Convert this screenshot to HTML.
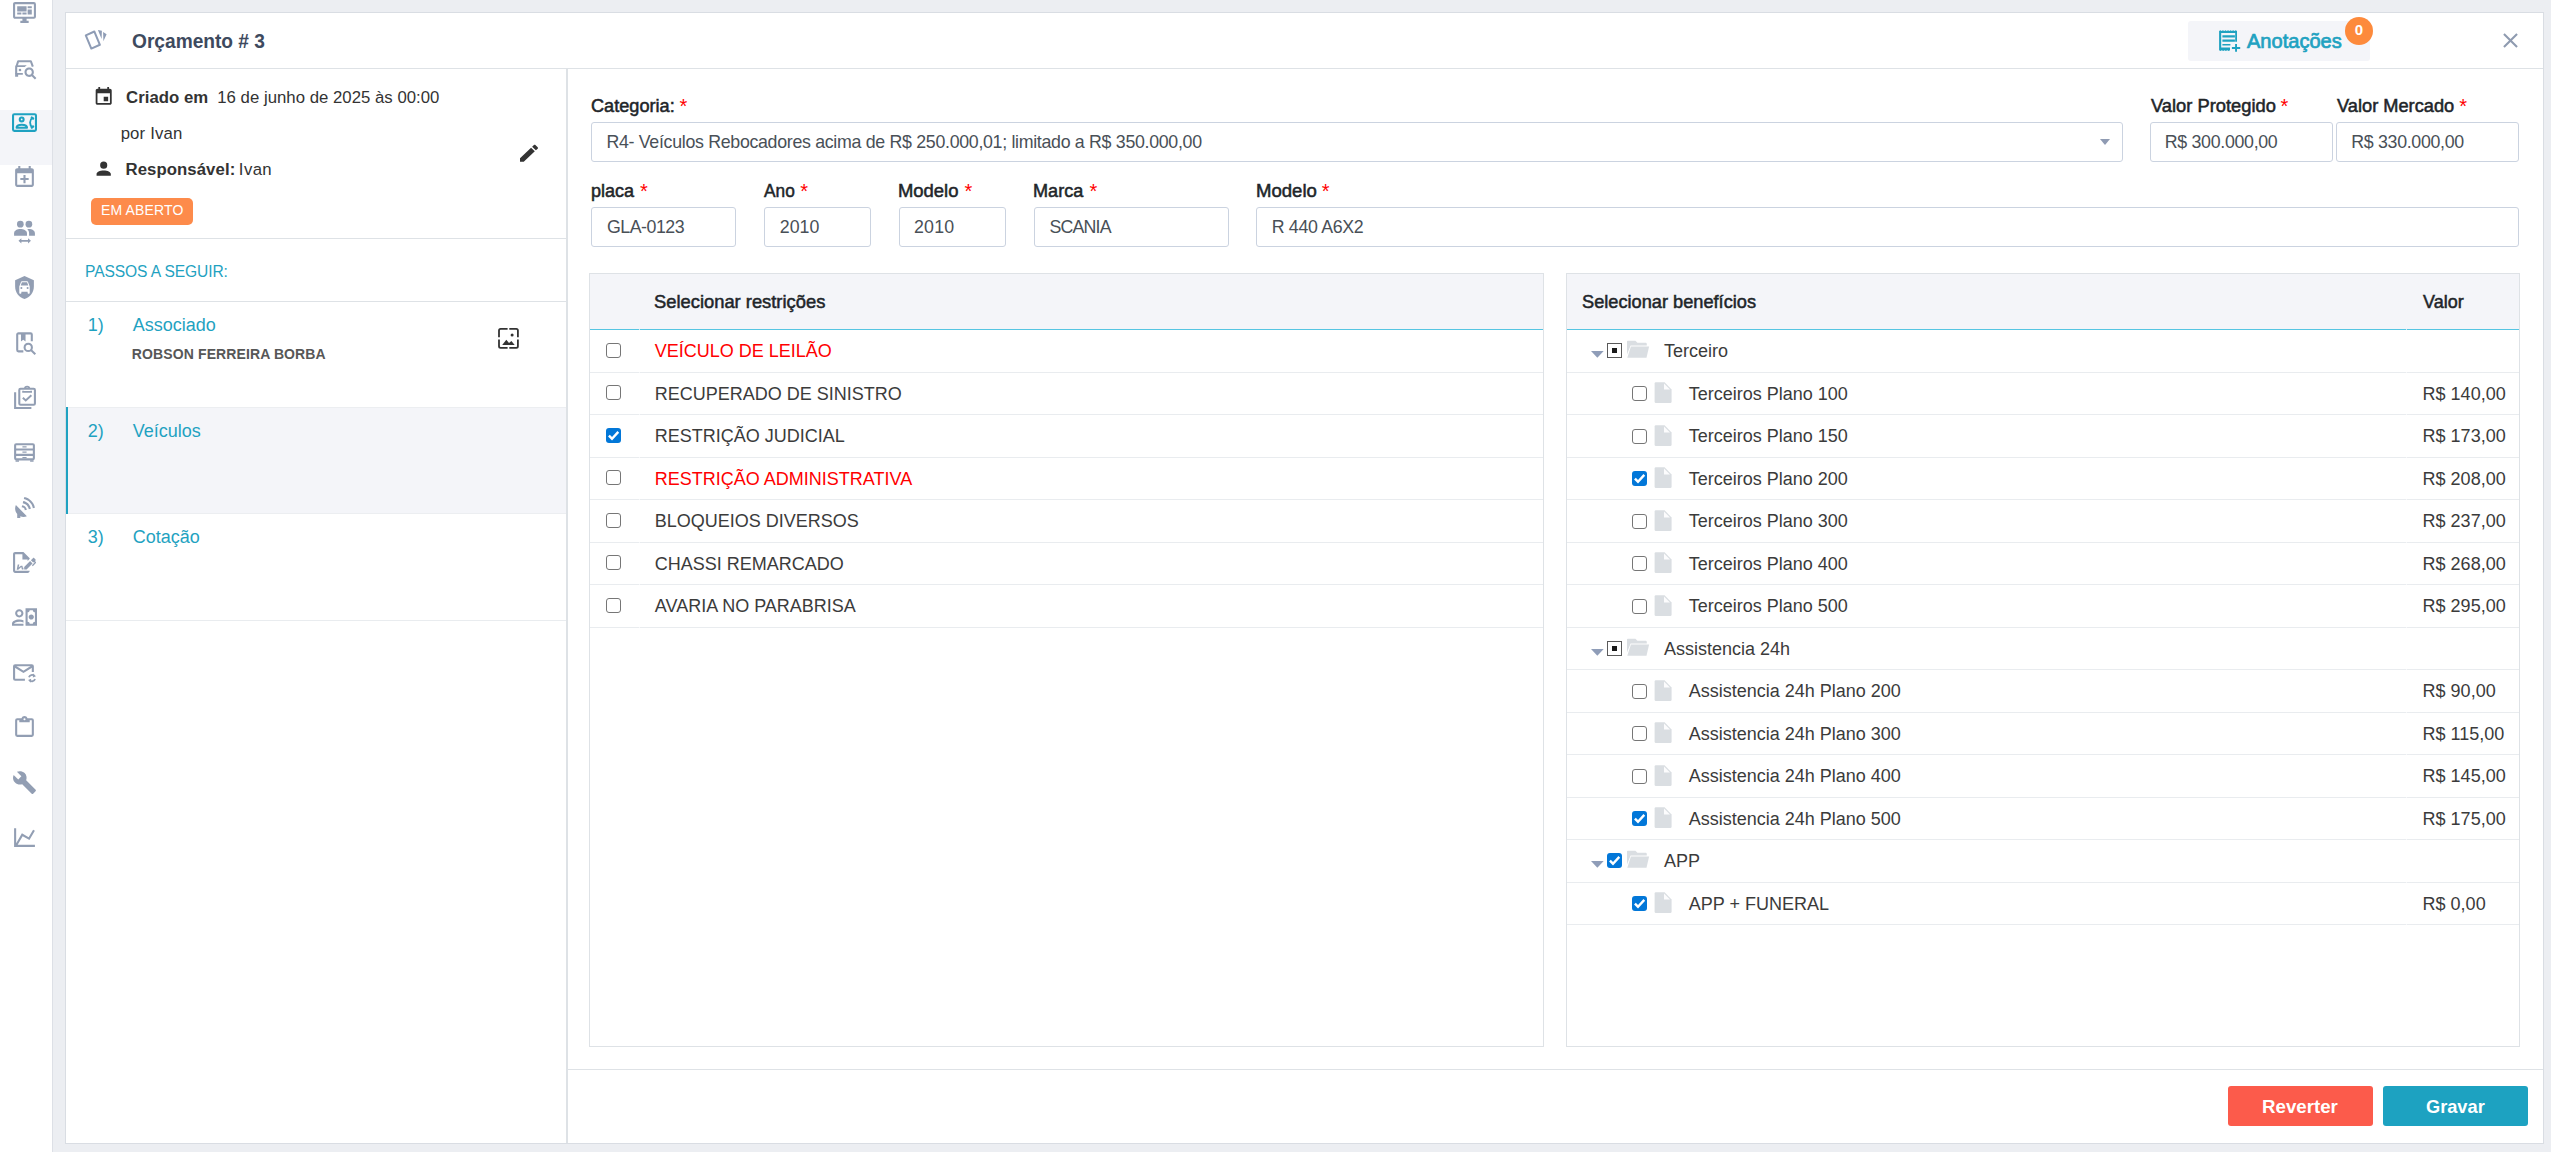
<!DOCTYPE html><html lang="pt-BR"><head><meta charset="utf-8"><title>Orçamento # 3</title><style>
*{box-sizing:border-box}
html,body{margin:0;padding:0}
body{width:2551px;height:1152px;overflow:hidden;position:relative;background:#eceef2;font-family:"Liberation Sans",sans-serif;color:#3b3b3b}
.abs{position:absolute}
.t{position:absolute;white-space:nowrap;line-height:1}
.inp{position:absolute;height:40px;border:1px solid #cbd3e0;border-radius:3px;background:#fff}
.cb{position:absolute;width:15px;height:15px;border:1.3px solid #767676;border-radius:3px;background:#fff}
.cb.on{border:none;background:#0277d8}
</style></head><body>
<div class="abs" style="left:0;top:0;width:53px;height:1152px;background:#fff;border-right:1px solid #dde0e6"></div>
<div class="abs" style="left:0;top:110px;width:52px;height:55px;background:#f4f5f9"></div>
<svg style="position:absolute;left:12px;top:0px;color:#929eb3" width="25" height="25" viewBox="0 0 24 24" fill="currentColor" ><path d="M21,16V4H3V16H21M21,2A2,2 0 0,1 23,4V16A2,2 0 0,1 21,18H14V20H16V22H8V20H10V18H3C1.89,18 1,17.1 1,16V4C1,2.89 1.89,2 3,2H21M5,6H14V11H5V6M15,6H19V8H15V6M19,9V14H15V9H19M5,12H9V14H5V12M10,12H14V14H10V12Z"/></svg>
<svg style="position:absolute;left:12px;top:55px;color:#929eb3" width="25" height="25" viewBox="0 0 24 24" fill="currentColor" ><path d="M16.5 12C14 12 12 14 12 16.5S14 21 16.5 21C17.4 21 18.2 20.8 18.9 20.3L22 23.4L23.4 22L20.3 18.9C20.8 18.2 21 17.4 21 16.5C21 14 19 12 16.5 12M16.5 19C15.1 19 14 17.9 14 16.5S15.1 14 16.5 14 19 15.1 19 16.5 17.9 19 16.5 19"/><path d="M4 18V12L5.9 6H18.1L20 11.2" fill="none" stroke="currentColor" stroke-width="2" stroke-linejoin="round"/><path d="M3.6 9.9H14.2L12.2 11.6H3.2ZM3 17.2H10.4V19H3ZM3 19H5.9V20.9H3Z"/><circle cx="7.66" cy="14.45" r="1.25"/></svg>
<svg style="position:absolute;left:12px;top:110px;color:#1fa2c1" width="25" height="25" viewBox="0 0 24 24" fill="currentColor" ><rect x="1" y="4" width="22" height="16" rx="1.2" fill="none" stroke="currentColor" stroke-width="2"/><circle cx="9.3" cy="9.1" r="1.85" fill="none" stroke="currentColor" stroke-width="2"/><path d="M4.4 17.1C4.4 14.6 7.4 14.1 9.4 14.1S14.4 14.6 14.4 17.1Z" fill="none" stroke="currentColor" stroke-width="2" stroke-linejoin="round"/><path d="M19.6 7.4C16.6 9.6 16.6 14.6 19.6 16.8" fill="none" stroke="currentColor" stroke-width="1.8"/><path d="M19 7.3L20.2 8.2M19 16.8L20.2 15.9" fill="none" stroke="currentColor" stroke-width="2.3" stroke-linecap="round"/></svg>
<svg style="position:absolute;left:12px;top:165px;color:#929eb3" width="25" height="25" viewBox="0 0 24 24" fill="currentColor" ><path d="M19 19V8H5V19H19M16 1H18V3H19C20.11 3 21 3.9 21 5V19C21 20.11 20.11 21 19 21H5C3.89 21 3 20.1 3 19V5C3 3.89 3.89 3 5 3H6V1H8V3H16V1M11 9.5H13V12.5H16V14.5H13V17.5H11V14.5H8V12.5H11V9.5Z"/></svg>
<svg style="position:absolute;left:12px;top:220px;color:#929eb3" width="25" height="25" viewBox="0 0 24 24" fill="currentColor" ><circle cx="8" cy="4" r="3.2"/><circle cx="16.2" cy="4" r="3.2"/><path d="M2 15V12.6C2 10 5.2 8.6 8 8.6S14.4 10 14.4 12.6V15Z"/><path d="M16.4 15V12.6C16.4 11 15.8 9.8 14.6 8.8C15.2 8.7 15.7 8.6 16.2 8.6C19 8.6 22 10 22 12.6V15Z"/><path d="M6.2 20L9 17.4V19.2H15.4V17.4L18.2 20L15.4 22.6V20.8H9V22.6Z"/></svg>
<svg style="position:absolute;left:12px;top:275px;color:#929eb3" width="25" height="25" viewBox="0 0 24 24" fill="currentColor" ><path d="M12,1L3,5V11C3,16.55 6.84,21.74 12,23C17.16,21.74 21,16.55 21,11V5L12,1M14.5,6C14.85,6 15.16,6.21 15.28,6.5L17,11.12V17.27C17,17.67 16.67,18 16.27,18H15.73C15.33,18 15,17.67 15,17.27V16H9V17.27C9,17.67 8.67,18 8.27,18H7.73C7.33,18 7,17.67 7,17.27V11.12L8.72,6.5C8.84,6.21 9.15,6 9.5,6H14.5M9.5,7L8.37,10H15.63L14.5,7H9.5M9,11.5A1,1 0 0,0 8,12.5A1,1 0 0,0 9,13.5A1,1 0 0,0 10,12.5A1,1 0 0,0 9,11.5M15,11.5A1,1 0 0,0 14,12.5A1,1 0 0,0 15,13.5A1,1 0 0,0 16,12.5A1,1 0 0,0 15,11.5Z"/></svg>
<svg style="position:absolute;left:12px;top:330px;color:#929eb3" width="25" height="25" viewBox="0 0 24 24" fill="currentColor" ><path d="M10.9 20.5H6.2C5.5 20.5 5 20 5 19.3V4.4C5 3.7 5.5 3.2 6.2 3.2H17.8C18.5 3.2 19 3.7 19 4.4V10.7" fill="none" stroke="currentColor" stroke-width="2"/><path d="M8.6 3.2H13V11L10.8 9.4L8.6 11Z"/><circle cx="15.6" cy="16.7" r="3.5" fill="none" stroke="currentColor" stroke-width="2"/><path d="M18.2 19.3L22.4 23.2" stroke="currentColor" stroke-width="2" fill="none"/></svg>
<svg style="position:absolute;left:12px;top:385px;color:#929eb3" width="25" height="25" viewBox="0 0 24 24" fill="currentColor" ><path d="M3 7V22H18.6" fill="none" stroke="currentColor" stroke-width="2"/><rect x="7" y="3.6" width="15" height="15.4" rx="1.2" fill="none" stroke="currentColor" stroke-width="2"/><path d="M10.6 5.6V6.6H18.4V5.6" fill="none" stroke="currentColor" stroke-width="1.6"/><path d="M12.4 3.6A2.1 2.1 0 0 1 16.6 3.6" fill="none" stroke="currentColor" stroke-width="1.8"/><path d="M10.4 12.2L13.2 14.8L18.6 9.8" fill="none" stroke="currentColor" stroke-width="1.9"/></svg>
<svg style="position:absolute;left:12px;top:440px;color:#929eb3" width="25" height="25" viewBox="0 0 24 24" fill="currentColor" ><rect x="3" y="4" width="18" height="14.6" rx="1" fill="none" stroke="currentColor" stroke-width="2"/><path d="M3 9.1H21M3 14.3H21" stroke="currentColor" stroke-width="2" fill="none"/><path d="M10 6.6H14M10 11.7H14M10 16.9H14" stroke="currentColor" stroke-width="1.1" fill="none"/><path d="M3.4 19.4H6.7V20.9H3.4ZM17.4 19.4H20.7V20.9H17.4Z"/></svg>
<svg style="position:absolute;left:12px;top:495px;color:#929eb3" width="25" height="25" viewBox="0 0 24 24" fill="currentColor" ><path d="M11.86,2L11.34,3.93C15.75,4.78 19.2,8.23 20.05,12.65L22,12.13C20.95,7.03 16.96,3.04 11.86,2M10.82,5.86L10.3,7.81C13.34,8.27 15.72,10.65 16.18,13.68L18.12,13.16C17.46,9.44 14.55,6.5 10.82,5.86M3.72,9.69C3.25,10.73 3,11.86 3,13C3,14.95 3.71,16.82 5,18.28V22H8V20.41C8.95,20.8 9.97,21 11,21C12.14,21 13.27,20.75 14.3,20.28L3.72,9.69M9.79,9.76L9.26,11.72A3,3 0 0,1 12.26,14.72L14.23,14.2C14,11.86 12.13,10 9.79,9.76Z"/></svg>
<svg style="position:absolute;left:12px;top:550px;color:#929eb3" width="25" height="25" viewBox="0 0 24 24" fill="currentColor" ><path d="M19.7 12.9L14 18.6H11.7V16.3L17.4 10.6L19.7 12.9M23.1 12.1C23.1 12.4 22.8 12.7 22.5 13L20 15.5L19.1 14.6L21.7 12L21.1 11.4L20.4 12.1L18.1 9.8L20.3 7.7C20.5 7.5 20.9 7.5 21.2 7.7L22.6 9.1C22.8 9.3 22.8 9.7 22.6 10C22.4 10.2 22.2 10.4 22.2 10.6C22.2 10.8 22.4 11 22.6 11.2C22.9 11.5 23.2 11.8 23.1 12.1M3 20V4H10V9H15V10.5L17 8.5V8L11 2H3C1.9 2 1 2.9 1 4V20C1 21.1 1.9 22 3 22H15C16.1 22 17 21.1 17 20H3M11 17.1C10.8 17.1 10.6 17.2 10.5 17.2L10 15H8.5L6.4 16.7L7 14H5.5L4.5 19H6L8.9 16.4L9.5 18.7H10.5L11 18.6V17.1Z"/></svg>
<svg style="position:absolute;left:12px;top:605px;color:#929eb3" width="25" height="25" viewBox="0 0 24 24" fill="currentColor" ><path d="M16 11.5C16 10.12 17.12 9 18.5 9S21 10.12 21 11.5 19.88 14 18.5 14 16 12.88 16 11.5M13 3V20H24V3H13M22 16C20.9 16 20 16.9 20 18H17C17 16.9 16.11 16 15 16V7C16.11 7 17 6.11 17 5H20C20 6.11 20.9 7 22 7V16M7 6C8.1 6 9 6.9 9 8S8.1 10 7 10 5 9.1 5 8 5.9 6 7 6M7 4C4.79 4 3 5.79 3 8S4.79 12 7 12 11 10.21 11 8 9.21 4 7 4M7 14C3.13 14 0 15.79 0 18V20H11V18H2C2 17.42 3.75 16 7 16C8.83 16 10.17 16.45 11 16.95V14.72C9.87 14.27 8.5 14 7 14Z"/></svg>
<svg style="position:absolute;left:12px;top:660px;color:#929eb3" width="25" height="25" viewBox="0 0 24 24" fill="currentColor" ><path d="M12.4 19H3C2.45 19 2 18.55 2 18V6C2 5.45 2.45 5 3 5H19C19.55 5 20 5.45 20 6V11.4" fill="none" stroke="currentColor" stroke-width="2"/><path d="M2.5 6L11 11.4L19.5 6" fill="none" stroke="currentColor" stroke-width="2"/><path d="M16.3 16.6A3.1 3.1 0 0 1 21.4 15.2M22.1 18.2A3.1 3.1 0 0 1 17 19.6" fill="none" stroke="currentColor" stroke-width="1.7"/><path d="M20.3 13L23 15.6L20 16.7ZM18.1 21.8L15.4 19.2L18.4 18.1Z"/></svg>
<svg style="position:absolute;left:12px;top:715px;color:#929eb3" width="25" height="25" viewBox="0 0 24 24" fill="currentColor" ><path d="M19,3H14.82C14.4,1.84 13.3,1 12,1C10.7,1 9.6,1.84 9.18,3H5A2,2 0 0,0 3,5V19A2,2 0 0,0 5,21H19A2,2 0 0,0 21,19V5A2,2 0 0,0 19,3M12,3A1,1 0 0,1 13,4A1,1 0 0,1 12,5A1,1 0 0,1 11,4A1,1 0 0,1 12,3M7,7H17V5H19V19H5V5H7V7Z"/></svg>
<svg style="position:absolute;left:12px;top:770px;color:#929eb3" width="25" height="25" viewBox="0 0 24 24" fill="currentColor" ><path d="M22.7 19l-9.1-9.1c.9-2.3.4-5-1.5-6.9-2-2-5-2.4-7.4-1.3L9 6 6 9 1.6 4.7C.4 7.1.9 10.1 2.9 12.1c1.9 1.9 4.6 2.4 6.9 1.5l9.1 9.1c.4.4 1 .4 1.4 0l2.3-2.3c.5-.4.5-1.1.1-1.4z"/></svg>
<svg style="position:absolute;left:12px;top:825px;color:#929eb3" width="25" height="25" viewBox="0 0 24 24" fill="currentColor" ><path d="M16,11.78L20.24,4.45L21.97,5.45L16.74,14.5L10.23,10.75L5.46,19H22V21H2V3H4V17.54L9.5,8L16,11.78Z"/></svg>
<div class="abs" style="left:65px;top:12px;width:2479px;height:1132px;background:#fff;border:1px solid #d9dde3"></div>
<div class="abs" style="left:66px;top:68px;width:2477px;height:1px;background:#dee2e6"></div>
<div class="abs" style="left:566px;top:69px;width:2px;height:1074px;background:#dee2e6"></div>
<svg class="abs" style="left:82px;top:28px" width="28" height="26" viewBox="0 0 28 26"><path d="M3.8 7.41L12.38 3.53L17.9 16.79L9.32 20.57Z" fill="none" stroke="#8e9cb5" stroke-width="2" stroke-linejoin="round"/><path d="M15.9 2.1L19.9 2.8L19.6 11.1ZM21.1 4L24.6 6.2L21.4 13.2Z" fill="#8e9cb5"/></svg>
<div class="t" style="left:131.72px;top:31px;font-size:20.75px;color:#3e4a5e;transform:scaleX(0.9224);transform-origin:0 0;font-weight:bold;">Orçamento # 3</div>
<div class="abs" style="left:2188px;top:21px;width:182px;height:40px;background:#f4f5f9;border-radius:3px"></div>
<svg class="abs" style="left:2218px;top:30px;color:#1fa2c1" width="24" height="23" viewBox="0 0 24 23" fill="currentColor"><path d="M1.1 1.1L2.38 0.30L3.66 1.10L4.94 0.30L6.21 1.10L7.49 0.30L8.77 1.10L10.05 0.30L11.33 1.10L12.61 0.30L13.89 1.10L15.16 0.30L16.44 1.10L17.72 0.30L19.00 1.10V11.8H17.2V3.1H3.2V17.4H12V20.3L10.64 21.1L9.28 20.3L7.91 21.1L6.55 20.3L5.19 21.1L3.82 20.3L2.46 21.1L1.10 20.3Z"/><path d="M4.4 5.2H16.9V7.5H4.4ZM4.4 9.6H16.9V11.8H4.4ZM4.4 13.9H12.4V15.6H4.4ZM13.9 16.9H22.2V18.9H13.9ZM17.1 14.1H19V21.8H17.1Z"/></svg>
<div class="t" style="left:2246.62px;top:32px;font-size:19.4px;color:#1fa2c1;transform:scaleX(1.0336);transform-origin:0 0;-webkit-text-stroke:0.7px #1fa2c1;">Anotações</div>
<div class="abs" style="left:2345px;top:16.6px;width:28px;height:28px;border-radius:14px;background:#fd8a3c"></div>
<div class="t" style="left:2345px;top:22px;width:28px;text-align:center;font-size:15px;font-weight:bold;color:#fff">0</div>
<svg class="abs" style="left:2498.4px;top:28.4px" width="25" height="25" viewBox="0 0 24 24" fill="#8f9bb0"><path d="M19,6.41L17.59,5L12,10.59L6.41,5L5,6.41L10.59,12L5,17.59L6.41,19L12,13.41L17.59,19L19,17.59L13.41,12L19,6.41Z"/></svg>
<svg class="abs" style="left:92.9px;top:85.5px" width="21.4" height="21.4" viewBox="0 0 24 24" fill="#333"><path d="M17 12h-5v5h5v-5zM16 1v2H8V1H6v2H5c-1.11 0-1.99.9-1.99 2L3 19c0 1.1.89 2 2 2h14c1.1 0 2-.9 2-2V5c0-1.1-.9-2-2-2h-1V1h-2zm3 18H5V8h14v11z"/></svg>
<div class="t" style="left:126.06px;top:90px;font-size:16.75px;color:#333;letter-spacing:0.032px;font-weight:bold;">Criado em</div>
<div class="t" style="left:217.23px;top:90px;font-size:16.75px;color:#333;letter-spacing:0.020px;">16 de junho de 2025 às 00:00</div>
<div class="t" style="left:120.63px;top:126px;font-size:16.75px;color:#333;letter-spacing:0.176px;">por Ivan</div>
<svg class="abs" style="left:92.7px;top:157.6px" width="21.4" height="21.4" viewBox="0 0 24 24" fill="#333"><path d="M12,4A4,4 0 0,1 16,8A4,4 0 0,1 12,12A4,4 0 0,1 8,8A4,4 0 0,1 12,4M12,14C16.42,14 20,15.79 20,18V20H4V18C4,15.79 7.58,14 12,14Z"/></svg>
<div class="t" style="left:125.49px;top:162px;font-size:16.75px;color:#333;letter-spacing:0.073px;font-weight:bold;">Responsável:</div>
<div class="t" style="left:238.86px;top:162px;font-size:16.75px;color:#333;letter-spacing:0.388px;">Ivan</div>
<svg class="abs" style="left:517px;top:142.1px" width="24" height="22.65" viewBox="0 0 24 24" preserveAspectRatio="none" fill="#333"><path d="M20.71,7.04C21.1,6.65 21.1,6 20.71,5.63L18.37,3.29C18,2.9 17.35,2.9 16.96,3.29L15.12,5.12L18.87,8.87M3,17.25V21H6.75L17.81,9.93L14.06,6.18L3,17.25Z"/></svg>
<div class="abs" style="left:91px;top:198px;width:102px;height:27px;border-radius:5px;background:#fd8b4b"></div>
<div class="t" style="left:101.05px;top:203px;font-size:14px;color:#fff;letter-spacing:0.143px;">EM ABERTO</div>
<div class="abs" style="left:66px;top:238px;width:500px;height:1px;background:#dee2e6"></div>
<div class="t" style="left:85.02px;top:264px;font-size:15.6px;color:#1fa2c1;letter-spacing:-0.100px;">PASSOS A SEGUIR:</div>
<div class="abs" style="left:66px;top:301px;width:500px;height:1px;background:#dee2e6"></div>
<div class="abs" style="left:66px;top:407px;width:500px;height:107px;background:#f4f5f9;border-top:1px solid #eceef1;border-bottom:1px solid #eceef1"></div>
<div class="abs" style="left:66px;top:407px;width:2px;height:107px;background:#1fa2c1"></div>
<div class="abs" style="left:66px;top:620px;width:500px;height:1px;background:#e9ecef"></div>
<div class="t" style="left:87.7px;top:316px;font-size:18px;color:#1fa2c1">1)</div>
<div class="t" style="left:132.7px;top:316px;font-size:18px;color:#1fa2c1">Associado</div>
<div class="t" style="left:87.7px;top:422px;font-size:18px;color:#1fa2c1">2)</div>
<div class="t" style="left:132.7px;top:422px;font-size:18px;color:#1fa2c1">Veículos</div>
<div class="t" style="left:87.7px;top:528px;font-size:18px;color:#1fa2c1">3)</div>
<div class="t" style="left:132.7px;top:528px;font-size:18px;color:#1fa2c1">Cotação</div>
<div class="t" style="left:131.87px;top:347px;font-size:14px;color:#575757;letter-spacing:0.110px;font-weight:bold;">ROBSON FERREIRA BORBA</div>
<svg class="abs" style="left:496px;top:326px" width="25" height="25" viewBox="0 0 25 25"><path d="M3 11.3V4.4Q3 2.8 4.6 2.8H11.6M13.3 2.8H20.3Q21.9 2.8 21.9 4.4V11.3M3 13.4V20.3Q3 21.9 4.6 21.9H11.6M13.3 21.9H20.3Q21.9 21.9 21.9 20.3V13.4" fill="none" stroke="#333" stroke-width="1.8"/><circle cx="16.1" cy="8.9" r="1.5" fill="#333"/><path d="M6.2 18.9L10.3 13.8L13 17L15.4 15L18.7 18.9Z" fill="#333"/></svg>
<div class="t" style="left:591.23px;top:98px;font-size:17.6px;color:#212529;transform:scaleX(1.0316);transform-origin:0 0;-webkit-text-stroke:0.5px #212529;">Categoria:</div>
<div class="t" style="left:679.58px;top:96px;font-size:20px;color:#f00;">*</div>
<div class="inp" style="left:591px;top:122px;width:1532px"></div>
<div class="t" style="left:606.44px;top:134px;font-size:17.8px;color:#495057;letter-spacing:-0.308px;">R4- Veículos Rebocadores acima de R$ 250.000,01; limitado a R$ 350.000,00</div>
<svg class="abs" style="left:2100px;top:139px" width="10" height="6" viewBox="0 0 10 6" fill="#8f9bb3"><path d="M0 0H10L5 6Z"/></svg>
<div class="t" style="left:2150.78px;top:98px;font-size:17.6px;color:#212529;transform:scaleX(1.0411);transform-origin:0 0;-webkit-text-stroke:0.5px #212529;">Valor Protegido</div>
<div class="t" style="left:2280.48px;top:96px;font-size:20px;color:#f00;">*</div>
<div class="inp" style="left:2150px;top:122px;width:183px"></div>
<div class="t" style="left:2164.74px;top:134px;font-size:17.8px;color:#495057;letter-spacing:-0.303px;">R$ 300.000,00</div>
<div class="t" style="left:2337.18px;top:98px;font-size:17.6px;color:#212529;transform:scaleX(1.0361);transform-origin:0 0;-webkit-text-stroke:0.5px #212529;">Valor Mercado</div>
<div class="t" style="left:2459.18px;top:96px;font-size:20px;color:#f00;">*</div>
<div class="inp" style="left:2336px;top:122px;width:183px"></div>
<div class="t" style="left:2351.34px;top:134px;font-size:17.8px;color:#495057;letter-spacing:-0.320px;">R$ 330.000,00</div>
<div class="t" style="left:591.00px;top:183px;font-size:17.6px;color:#212529;transform:scaleX(1.0231);transform-origin:0 0;-webkit-text-stroke:0.5px #212529;">placa</div>
<div class="t" style="left:639.98px;top:181px;font-size:20px;color:#f00;">*</div>
<div class="inp" style="left:591px;top:207px;width:145px"></div>
<div class="t" style="left:607.01px;top:219px;font-size:17.8px;color:#495057;letter-spacing:-0.497px;">GLA-0123</div>
<div class="t" style="left:764.42px;top:183px;font-size:17.6px;color:#212529;transform:scaleX(0.9819);transform-origin:0 0;-webkit-text-stroke:0.5px #212529;">Ano</div>
<div class="t" style="left:800.28px;top:181px;font-size:20px;color:#f00;">*</div>
<div class="inp" style="left:764px;top:207px;width:107px"></div>
<div class="t" style="left:779.71px;top:219px;font-size:17.8px;color:#495057;letter-spacing:0.043px;">2010</div>
<div class="t" style="left:898.34px;top:183px;font-size:17.6px;color:#212529;transform:scaleX(1.0478);transform-origin:0 0;-webkit-text-stroke:0.5px #212529;">Modelo</div>
<div class="t" style="left:964.48px;top:181px;font-size:20px;color:#f00;">*</div>
<div class="inp" style="left:899px;top:207px;width:107px"></div>
<div class="t" style="left:914.01px;top:219px;font-size:17.8px;color:#495057;letter-spacing:0.226px;">2010</div>
<div class="t" style="left:1033.07px;top:183px;font-size:17.6px;color:#212529;transform:scaleX(1.0283);transform-origin:0 0;-webkit-text-stroke:0.5px #212529;">Marca</div>
<div class="t" style="left:1089.48px;top:181px;font-size:20px;color:#f00;">*</div>
<div class="inp" style="left:1034px;top:207px;width:195px"></div>
<div class="t" style="left:1049.60px;top:219px;font-size:17.8px;color:#495057;letter-spacing:-0.848px;">SCANIA</div>
<div class="t" style="left:1255.63px;top:183px;font-size:17.6px;color:#212529;transform:scaleX(1.0550);transform-origin:0 0;-webkit-text-stroke:0.5px #212529;">Modelo</div>
<div class="t" style="left:1321.78px;top:181px;font-size:20px;color:#f00;">*</div>
<div class="inp" style="left:1256px;top:207px;width:1263px"></div>
<div class="t" style="left:1271.74px;top:219px;font-size:17.8px;color:#495057;letter-spacing:-0.329px;">R 440 A6X2</div>
<div class="abs" style="left:589px;top:273px;width:955px;height:774px;border:1px solid #dee2e6;background:#fff"></div>
<div class="abs" style="left:590px;top:274px;width:953px;height:55px;background:#f4f5f9"></div>
<div class="abs" style="left:590px;top:329px;width:953px;height:1px;background:#56c5e2"></div>
<div class="abs" style="left:1566px;top:273px;width:954px;height:774px;border:1px solid #dee2e6;background:#fff"></div>
<div class="abs" style="left:1567px;top:274px;width:952px;height:55px;background:#f4f5f9"></div>
<div class="abs" style="left:1567px;top:329px;width:952px;height:1px;background:#56c5e2"></div>
<div class="abs" style="left:639px;top:329px;width:1px;height:1px;background:#d2ecf5"></div>
<div class="abs" style="left:2406px;top:329px;width:1px;height:1px;background:#d2ecf5"></div>
<div class="t" style="left:654.32px;top:294px;font-size:17.8px;color:#212529;transform:scaleX(1.0318);transform-origin:0 0;-webkit-text-stroke:0.5px #212529;">Selecionar restrições</div>
<div class="t" style="left:1581.63px;top:294px;font-size:17.8px;color:#212529;transform:scaleX(1.0234);transform-origin:0 0;-webkit-text-stroke:0.5px #212529;">Selecionar benefícios</div>
<div class="t" style="left:2422.68px;top:294px;font-size:17.8px;color:#212529;transform:scaleX(1.0107);transform-origin:0 0;-webkit-text-stroke:0.5px #212529;">Valor</div>
<div class="abs" style="left:590px;top:372px;width:953px;height:1px;background:#e9ecef"></div>
<div class="abs" style="left:639px;top:372px;width:1px;height:1px;background:#f6f7f9"></div>
<div class="cb" style="left:606px;top:343px"></div>
<div class="t" style="left:654.8px;top:342px;font-size:18px;color:#f00">VEÍCULO DE LEILÃO</div>
<div class="abs" style="left:590px;top:414px;width:953px;height:1px;background:#e9ecef"></div>
<div class="abs" style="left:639px;top:414px;width:1px;height:1px;background:#f6f7f9"></div>
<div class="cb" style="left:606px;top:385px"></div>
<div class="t" style="left:654.8px;top:385px;font-size:18px;color:#3b3b3b">RECUPERADO DE SINISTRO</div>
<div class="abs" style="left:590px;top:457px;width:953px;height:1px;background:#e9ecef"></div>
<div class="abs" style="left:639px;top:457px;width:1px;height:1px;background:#f6f7f9"></div>
<div class="cb on" style="left:606px;top:428px"><svg class="abs" style="left:0;top:0" width="15" height="15" viewBox="0 0 15 15" fill="none" stroke="#fff" stroke-width="2.4"><path d="M2.9 7.6L6 10.7L12.3 3.9"/></svg></div>
<div class="t" style="left:654.8px;top:427px;font-size:18px;color:#3b3b3b">RESTRIÇÃO JUDICIAL</div>
<div class="abs" style="left:590px;top:499px;width:953px;height:1px;background:#e9ecef"></div>
<div class="abs" style="left:639px;top:499px;width:1px;height:1px;background:#f6f7f9"></div>
<div class="cb" style="left:606px;top:470px"></div>
<div class="t" style="left:654.8px;top:470px;font-size:18px;color:#f00">RESTRIÇÃO ADMINISTRATIVA</div>
<div class="abs" style="left:590px;top:542px;width:953px;height:1px;background:#e9ecef"></div>
<div class="abs" style="left:639px;top:542px;width:1px;height:1px;background:#f6f7f9"></div>
<div class="cb" style="left:606px;top:513px"></div>
<div class="t" style="left:654.8px;top:512px;font-size:18px;color:#3b3b3b">BLOQUEIOS DIVERSOS</div>
<div class="abs" style="left:590px;top:584px;width:953px;height:1px;background:#e9ecef"></div>
<div class="abs" style="left:639px;top:584px;width:1px;height:1px;background:#f6f7f9"></div>
<div class="cb" style="left:606px;top:555px"></div>
<div class="t" style="left:654.8px;top:555px;font-size:18px;color:#3b3b3b">CHASSI REMARCADO</div>
<div class="abs" style="left:590px;top:627px;width:953px;height:1px;background:#e9ecef"></div>
<div class="abs" style="left:639px;top:627px;width:1px;height:1px;background:#f6f7f9"></div>
<div class="cb" style="left:606px;top:598px"></div>
<div class="t" style="left:654.8px;top:597px;font-size:18px;color:#3b3b3b">AVARIA NO PARABRISA</div>
<div class="abs" style="left:1567px;top:372px;width:952px;height:1px;background:#e9ecef"></div>
<div class="abs" style="left:2406px;top:372px;width:1px;height:1px;background:#f6f7f9"></div>
<svg class="abs" style="left:1590.5px;top:351px" width="13" height="7" viewBox="0 0 13 7" fill="#8f9db8"><path d="M0 0H12.7L6.35 6.8Z"/></svg>
<div class="abs" style="left:1607px;top:343px;width:15px;height:15px;border:1.2px solid #5a5a5a;background:#fff"><div class="abs" style="left:3.6px;top:3.7px;width:5.4px;height:5.2px;background:#1a1a1a"></div></div>
<svg class="abs" style="left:1626px;top:340px" width="24" height="18" viewBox="0 0 24 18" fill="#dadee2"><path d="M1 1.6Q1 0.8 1.8 0.8H9.4L11.4 2.8H19.6Q20.8 2.8 20.8 4V5.4H4.6L1 14.6Z"/><path d="M4.9 6.4H23.1L20.5 17.8H1.3Z"/></svg>
<div class="t" style="left:1663.9px;top:342px;font-size:18px;color:#3b3b3b">Terceiro</div>
<div class="abs" style="left:1567px;top:414px;width:952px;height:1px;background:#e9ecef"></div>
<div class="abs" style="left:2406px;top:414px;width:1px;height:1px;background:#f6f7f9"></div>
<div class="cb" style="left:1632px;top:386px"></div>
<svg class="abs" style="left:1654px;top:382px" width="18" height="22" viewBox="0 0 18 22"><path d="M1.9 0.2H10.6L17.6 7.4V19.7Q17.6 21 16.3 21H1.9Q0.6 21 0.6 19.7V1.5Q0.6 0.2 1.9 0.2Z" fill="#dadee2"/><path d="M10 1.6V7.6H16Z" fill="#fcfcfd"/></svg>
<div class="t" style="left:1688.7px;top:385px;font-size:18px;color:#3b3b3b">Terceiros Plano 100</div>
<div class="t" style="left:2422.6px;top:385px;font-size:18px;color:#3b3b3b">R$ 140,00</div>
<div class="abs" style="left:1567px;top:457px;width:952px;height:1px;background:#e9ecef"></div>
<div class="abs" style="left:2406px;top:457px;width:1px;height:1px;background:#f6f7f9"></div>
<div class="cb" style="left:1632px;top:429px"></div>
<svg class="abs" style="left:1654px;top:425px" width="18" height="22" viewBox="0 0 18 22"><path d="M1.9 0.2H10.6L17.6 7.4V19.7Q17.6 21 16.3 21H1.9Q0.6 21 0.6 19.7V1.5Q0.6 0.2 1.9 0.2Z" fill="#dadee2"/><path d="M10 1.6V7.6H16Z" fill="#fcfcfd"/></svg>
<div class="t" style="left:1688.7px;top:427px;font-size:18px;color:#3b3b3b">Terceiros Plano 150</div>
<div class="t" style="left:2422.6px;top:427px;font-size:18px;color:#3b3b3b">R$ 173,00</div>
<div class="abs" style="left:1567px;top:499px;width:952px;height:1px;background:#e9ecef"></div>
<div class="abs" style="left:2406px;top:499px;width:1px;height:1px;background:#f6f7f9"></div>
<div class="cb on" style="left:1632px;top:471px"><svg class="abs" style="left:0;top:0" width="15" height="15" viewBox="0 0 15 15" fill="none" stroke="#fff" stroke-width="2.4"><path d="M2.9 7.6L6 10.7L12.3 3.9"/></svg></div>
<svg class="abs" style="left:1654px;top:467px" width="18" height="22" viewBox="0 0 18 22"><path d="M1.9 0.2H10.6L17.6 7.4V19.7Q17.6 21 16.3 21H1.9Q0.6 21 0.6 19.7V1.5Q0.6 0.2 1.9 0.2Z" fill="#dadee2"/><path d="M10 1.6V7.6H16Z" fill="#fcfcfd"/></svg>
<div class="t" style="left:1688.7px;top:470px;font-size:18px;color:#3b3b3b">Terceiros Plano 200</div>
<div class="t" style="left:2422.6px;top:470px;font-size:18px;color:#3b3b3b">R$ 208,00</div>
<div class="abs" style="left:1567px;top:542px;width:952px;height:1px;background:#e9ecef"></div>
<div class="abs" style="left:2406px;top:542px;width:1px;height:1px;background:#f6f7f9"></div>
<div class="cb" style="left:1632px;top:514px"></div>
<svg class="abs" style="left:1654px;top:510px" width="18" height="22" viewBox="0 0 18 22"><path d="M1.9 0.2H10.6L17.6 7.4V19.7Q17.6 21 16.3 21H1.9Q0.6 21 0.6 19.7V1.5Q0.6 0.2 1.9 0.2Z" fill="#dadee2"/><path d="M10 1.6V7.6H16Z" fill="#fcfcfd"/></svg>
<div class="t" style="left:1688.7px;top:512px;font-size:18px;color:#3b3b3b">Terceiros Plano 300</div>
<div class="t" style="left:2422.6px;top:512px;font-size:18px;color:#3b3b3b">R$ 237,00</div>
<div class="abs" style="left:1567px;top:584px;width:952px;height:1px;background:#e9ecef"></div>
<div class="abs" style="left:2406px;top:584px;width:1px;height:1px;background:#f6f7f9"></div>
<div class="cb" style="left:1632px;top:556px"></div>
<svg class="abs" style="left:1654px;top:552px" width="18" height="22" viewBox="0 0 18 22"><path d="M1.9 0.2H10.6L17.6 7.4V19.7Q17.6 21 16.3 21H1.9Q0.6 21 0.6 19.7V1.5Q0.6 0.2 1.9 0.2Z" fill="#dadee2"/><path d="M10 1.6V7.6H16Z" fill="#fcfcfd"/></svg>
<div class="t" style="left:1688.7px;top:555px;font-size:18px;color:#3b3b3b">Terceiros Plano 400</div>
<div class="t" style="left:2422.6px;top:555px;font-size:18px;color:#3b3b3b">R$ 268,00</div>
<div class="abs" style="left:1567px;top:627px;width:952px;height:1px;background:#e9ecef"></div>
<div class="abs" style="left:2406px;top:627px;width:1px;height:1px;background:#f6f7f9"></div>
<div class="cb" style="left:1632px;top:599px"></div>
<svg class="abs" style="left:1654px;top:595px" width="18" height="22" viewBox="0 0 18 22"><path d="M1.9 0.2H10.6L17.6 7.4V19.7Q17.6 21 16.3 21H1.9Q0.6 21 0.6 19.7V1.5Q0.6 0.2 1.9 0.2Z" fill="#dadee2"/><path d="M10 1.6V7.6H16Z" fill="#fcfcfd"/></svg>
<div class="t" style="left:1688.7px;top:597px;font-size:18px;color:#3b3b3b">Terceiros Plano 500</div>
<div class="t" style="left:2422.6px;top:597px;font-size:18px;color:#3b3b3b">R$ 295,00</div>
<div class="abs" style="left:1567px;top:669px;width:952px;height:1px;background:#e9ecef"></div>
<div class="abs" style="left:2406px;top:669px;width:1px;height:1px;background:#f6f7f9"></div>
<svg class="abs" style="left:1590.5px;top:649px" width="13" height="7" viewBox="0 0 13 7" fill="#8f9db8"><path d="M0 0H12.7L6.35 6.8Z"/></svg>
<div class="abs" style="left:1607px;top:641px;width:15px;height:15px;border:1.2px solid #5a5a5a;background:#fff"><div class="abs" style="left:3.6px;top:3.7px;width:5.4px;height:5.2px;background:#1a1a1a"></div></div>
<svg class="abs" style="left:1626px;top:638px" width="24" height="18" viewBox="0 0 24 18" fill="#dadee2"><path d="M1 1.6Q1 0.8 1.8 0.8H9.4L11.4 2.8H19.6Q20.8 2.8 20.8 4V5.4H4.6L1 14.6Z"/><path d="M4.9 6.4H23.1L20.5 17.8H1.3Z"/></svg>
<div class="t" style="left:1663.9px;top:640px;font-size:18px;color:#3b3b3b">Assistencia 24h</div>
<div class="abs" style="left:1567px;top:712px;width:952px;height:1px;background:#e9ecef"></div>
<div class="abs" style="left:2406px;top:712px;width:1px;height:1px;background:#f6f7f9"></div>
<div class="cb" style="left:1632px;top:684px"></div>
<svg class="abs" style="left:1654px;top:680px" width="18" height="22" viewBox="0 0 18 22"><path d="M1.9 0.2H10.6L17.6 7.4V19.7Q17.6 21 16.3 21H1.9Q0.6 21 0.6 19.7V1.5Q0.6 0.2 1.9 0.2Z" fill="#dadee2"/><path d="M10 1.6V7.6H16Z" fill="#fcfcfd"/></svg>
<div class="t" style="left:1688.7px;top:682px;font-size:18px;color:#3b3b3b">Assistencia 24h Plano 200</div>
<div class="t" style="left:2422.6px;top:682px;font-size:18px;color:#3b3b3b">R$ 90,00</div>
<div class="abs" style="left:1567px;top:754px;width:952px;height:1px;background:#e9ecef"></div>
<div class="abs" style="left:2406px;top:754px;width:1px;height:1px;background:#f6f7f9"></div>
<div class="cb" style="left:1632px;top:726px"></div>
<svg class="abs" style="left:1654px;top:722px" width="18" height="22" viewBox="0 0 18 22"><path d="M1.9 0.2H10.6L17.6 7.4V19.7Q17.6 21 16.3 21H1.9Q0.6 21 0.6 19.7V1.5Q0.6 0.2 1.9 0.2Z" fill="#dadee2"/><path d="M10 1.6V7.6H16Z" fill="#fcfcfd"/></svg>
<div class="t" style="left:1688.7px;top:725px;font-size:18px;color:#3b3b3b">Assistencia 24h Plano 300</div>
<div class="t" style="left:2422.6px;top:725px;font-size:18px;color:#3b3b3b">R$ 115,00</div>
<div class="abs" style="left:1567px;top:797px;width:952px;height:1px;background:#e9ecef"></div>
<div class="abs" style="left:2406px;top:797px;width:1px;height:1px;background:#f6f7f9"></div>
<div class="cb" style="left:1632px;top:769px"></div>
<svg class="abs" style="left:1654px;top:765px" width="18" height="22" viewBox="0 0 18 22"><path d="M1.9 0.2H10.6L17.6 7.4V19.7Q17.6 21 16.3 21H1.9Q0.6 21 0.6 19.7V1.5Q0.6 0.2 1.9 0.2Z" fill="#dadee2"/><path d="M10 1.6V7.6H16Z" fill="#fcfcfd"/></svg>
<div class="t" style="left:1688.7px;top:767px;font-size:18px;color:#3b3b3b">Assistencia 24h Plano 400</div>
<div class="t" style="left:2422.6px;top:767px;font-size:18px;color:#3b3b3b">R$ 145,00</div>
<div class="abs" style="left:1567px;top:839px;width:952px;height:1px;background:#e9ecef"></div>
<div class="abs" style="left:2406px;top:839px;width:1px;height:1px;background:#f6f7f9"></div>
<div class="cb on" style="left:1632px;top:811px"><svg class="abs" style="left:0;top:0" width="15" height="15" viewBox="0 0 15 15" fill="none" stroke="#fff" stroke-width="2.4"><path d="M2.9 7.6L6 10.7L12.3 3.9"/></svg></div>
<svg class="abs" style="left:1654px;top:807px" width="18" height="22" viewBox="0 0 18 22"><path d="M1.9 0.2H10.6L17.6 7.4V19.7Q17.6 21 16.3 21H1.9Q0.6 21 0.6 19.7V1.5Q0.6 0.2 1.9 0.2Z" fill="#dadee2"/><path d="M10 1.6V7.6H16Z" fill="#fcfcfd"/></svg>
<div class="t" style="left:1688.7px;top:810px;font-size:18px;color:#3b3b3b">Assistencia 24h Plano 500</div>
<div class="t" style="left:2422.6px;top:810px;font-size:18px;color:#3b3b3b">R$ 175,00</div>
<div class="abs" style="left:1567px;top:882px;width:952px;height:1px;background:#e9ecef"></div>
<div class="abs" style="left:2406px;top:882px;width:1px;height:1px;background:#f6f7f9"></div>
<svg class="abs" style="left:1590.5px;top:861px" width="13" height="7" viewBox="0 0 13 7" fill="#8f9db8"><path d="M0 0H12.7L6.35 6.8Z"/></svg>
<div class="cb on" style="left:1607px;top:853px"><svg class="abs" style="left:0;top:0" width="15" height="15" viewBox="0 0 15 15" fill="none" stroke="#fff" stroke-width="2.4"><path d="M2.9 7.6L6 10.7L12.3 3.9"/></svg></div>
<svg class="abs" style="left:1626px;top:850px" width="24" height="18" viewBox="0 0 24 18" fill="#dadee2"><path d="M1 1.6Q1 0.8 1.8 0.8H9.4L11.4 2.8H19.6Q20.8 2.8 20.8 4V5.4H4.6L1 14.6Z"/><path d="M4.9 6.4H23.1L20.5 17.8H1.3Z"/></svg>
<div class="t" style="left:1663.9px;top:852px;font-size:18px;color:#3b3b3b">APP</div>
<div class="abs" style="left:1567px;top:924px;width:952px;height:1px;background:#e9ecef"></div>
<div class="abs" style="left:2406px;top:924px;width:1px;height:1px;background:#f6f7f9"></div>
<div class="cb on" style="left:1632px;top:896px"><svg class="abs" style="left:0;top:0" width="15" height="15" viewBox="0 0 15 15" fill="none" stroke="#fff" stroke-width="2.4"><path d="M2.9 7.6L6 10.7L12.3 3.9"/></svg></div>
<svg class="abs" style="left:1654px;top:892px" width="18" height="22" viewBox="0 0 18 22"><path d="M1.9 0.2H10.6L17.6 7.4V19.7Q17.6 21 16.3 21H1.9Q0.6 21 0.6 19.7V1.5Q0.6 0.2 1.9 0.2Z" fill="#dadee2"/><path d="M10 1.6V7.6H16Z" fill="#fcfcfd"/></svg>
<div class="t" style="left:1688.7px;top:895px;font-size:18px;color:#3b3b3b">APP + FUNERAL</div>
<div class="t" style="left:2422.6px;top:895px;font-size:18px;color:#3b3b3b">R$ 0,00</div>
<div class="abs" style="left:568px;top:1069px;width:1975px;height:1px;background:#dee2e6"></div>
<div class="abs" style="left:2228px;top:1086px;width:145px;height:40px;border-radius:3px;background:#fc5b4b"></div>
<div class="t" style="left:2261.76px;top:1098px;font-size:18.5px;color:#fff;transform:scaleX(1.0099);transform-origin:0 0;font-weight:bold;">Reverter</div>
<div class="abs" style="left:2383px;top:1086px;width:145px;height:40px;border-radius:3px;background:#1da2c1"></div>
<div class="t" style="left:2425.95px;top:1098px;font-size:18.5px;color:#fff;transform:scaleX(0.9842);transform-origin:0 0;font-weight:bold;">Gravar</div>
</body></html>
